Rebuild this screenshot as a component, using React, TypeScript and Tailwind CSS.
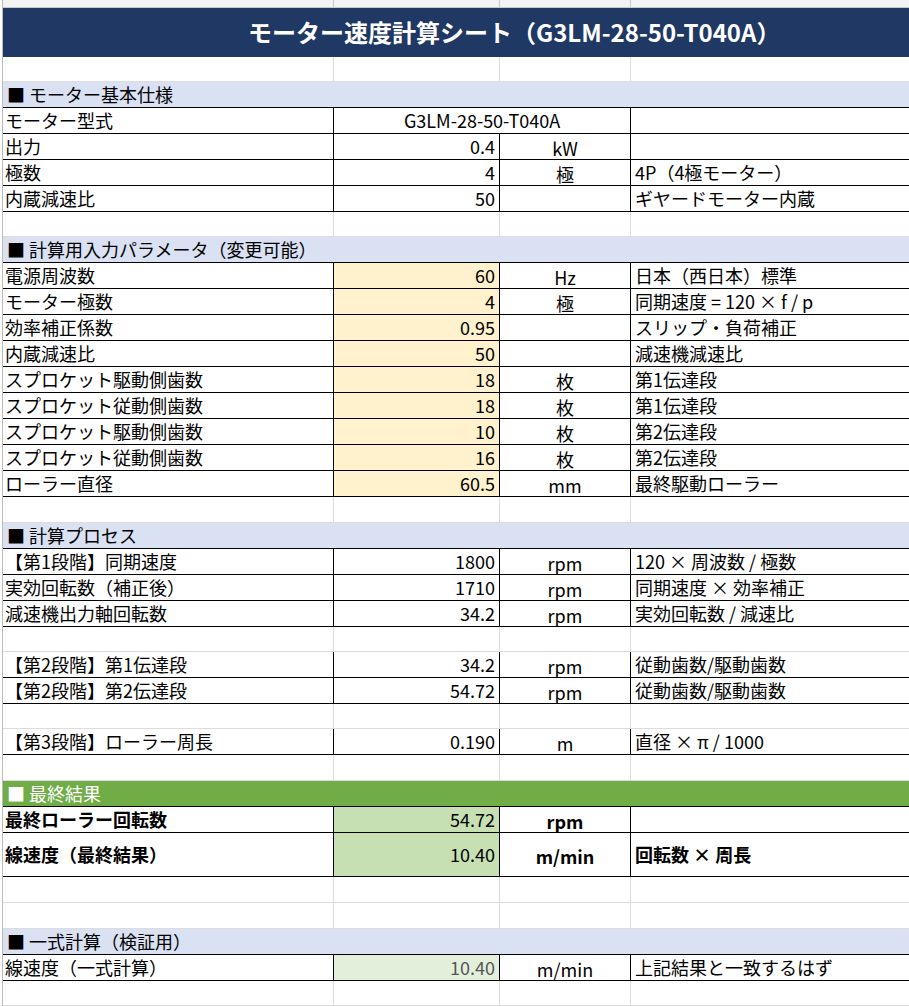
import React from "react";

type R = { a: string; b?: string; c?: string; d?: string; fill?: string; bold?: boolean; h?: number; bColor?: string; span?: boolean };

const font = { fontFamily: '"Noto Sans CJK JP","Noto Sans",sans-serif' };

function Empty({ h = 26 }: { h?: number }) {
  return (
    <div className="flex border-b border-[#dcdcdc]" style={{ height: h }}>
      <div className="w-[331px] border-r border-[#dcdcdc]" />
      <div className="w-[166px] border-r border-[#dcdcdc]" />
      <div className="w-[131px] border-r border-[#dcdcdc]" />
      <div className="flex-1" />
    </div>
  );
}

function Section({ t, green }: { t: string; green?: boolean }) {
  return (
    <div className={`flex items-center h-[26px] border-b border-black pl-[4px] text-[18px] ${green ? "bg-[#70ad47] text-white" : "bg-[#d9e1f2] text-black"}`}>
      {green ? "■ 最終結果" : t}
    </div>
  );
}

function Row({ a, b = "", c = "", d = "", fill = "", bold, h = 26, bColor = "text-black", span }: R) {
  return (
    <div className="flex border-b border-black text-[18px]" style={{ height: h }}>
      <div className={`w-[331px] border-r border-black pl-[2px] flex items-center whitespace-nowrap ${bold ? "font-bold" : ""}`}>{a}</div>
      {span ? (
        <div className="w-[297px] border-r border-black flex items-center justify-center">{b}</div>
      ) : (
        <>
          <div className={`w-[166px] border-r border-black pr-[4px] flex items-center justify-end ${fill} ${bColor}`}>{b}</div>
          <div className={`w-[131px] border-r border-black flex items-center justify-center pt-[4px] ${bold ? "font-semibold" : ""}`}>{c}</div>
        </>
      )}
      <div className={`flex-1 pl-[4px] flex items-center whitespace-nowrap ${bold ? "font-semibold" : ""}`}>{d}</div>
    </div>
  );
}

export default function App() {
  const y = "bg-[#fff2cc]";
  return (
    <div className="w-[909px] h-[1006px] overflow-hidden bg-white text-black flex" style={font}>
      <div className="w-[3px] border-r border-[#bbbbbb]" />
      <div className="flex-1 flex flex-col">
        <div className="h-[8px] flex border-b border-[#c8c8c8] bg-[#f3f3f3]">
          <div className="w-[331px] border-r border-[#c8c8c8]" />
          <div className="w-[166px] border-r border-[#c8c8c8]" />
          <div className="w-[131px] border-r border-[#c8c8c8]" />
        </div>
        <div className="h-[51px] bg-[#203864] text-white font-bold text-[24px] flex items-center pl-[245px] whitespace-nowrap">
          モーター速度計算シート（G3LM-28-50-T040A）
        </div>
        <Empty />
        <Section t="■ モーター基本仕様" />
        <Row a="モーター型式" b="G3LM-28-50-T040A" span />
        <Row a="出力" b="0.4" c="kW" />
        <Row a="極数" b="4" c="極" d="4P（4極モーター）" />
        <Row a="内蔵減速比" b="50" d="ギヤードモーター内蔵" />
        <Empty />
        <Section t="■ 計算用入力パラメータ（変更可能）" />
        <Row a="電源周波数" b="60" c="Hz" d="日本（西日本）標準" fill={y} />
        <Row a="モーター極数" b="4" c="極" d="同期速度 = 120 × f / p" fill={y} />
        <Row a="効率補正係数" b="0.95" d="スリップ・負荷補正" fill={y} />
        <Row a="内蔵減速比" b="50" d="減速機減速比" fill={y} />
        <Row a="スプロケット駆動側歯数" b="18" c="枚" d="第1伝達段" fill={y} />
        <Row a="スプロケット従動側歯数" b="18" c="枚" d="第1伝達段" fill={y} />
        <Row a="スプロケット駆動側歯数" b="10" c="枚" d="第2伝達段" fill={y} />
        <Row a="スプロケット従動側歯数" b="16" c="枚" d="第2伝達段" fill={y} />
        <Row a="ローラー直径" b="60.5" c="mm" d="最終駆動ローラー" fill={y} />
        <Empty />
        <Section t="■ 計算プロセス" />
        <Row a="【第1段階】同期速度" b="1800" c="rpm" d="120 × 周波数 / 極数" />
        <Row a="実効回転数（補正後）" b="1710" c="rpm" d="同期速度 × 効率補正" />
        <Row a="減速機出力軸回転数" b="34.2" c="rpm" d="実効回転数 / 減速比" />
        <Empty />
        <Row a="【第2段階】第1伝達段" b="34.2" c="rpm" d="従動歯数/駆動歯数" />
        <Row a="【第2段階】第2伝達段" b="54.72" c="rpm" d="従動歯数/駆動歯数" />
        <Empty />
        <Row a="【第3段階】ローラー周長" b="0.190" c="m" d="直径 × π / 1000" />
        <Empty h={27} />
        <Section t="" green />
        <Row a="最終ローラー回転数" b="54.72" c="rpm" fill="bg-[#c6e0b4]" bold />
        <Row a="線速度（最終結果）" b="10.40" c="m/min" d="回転数 × 周長" fill="bg-[#c6e0b4]" bold h={45} />
        <Empty h={27} />
        <Empty h={27} />
        <Section t="■ 一式計算（検証用）" />
        <Row a="線速度（一式計算）" b="10.40" c="m/min" d="上記結果と一致するはず" fill="bg-[#e2efda]" bColor="text-[#555]" />
        <Empty />
      </div>
    </div>
  );
}
